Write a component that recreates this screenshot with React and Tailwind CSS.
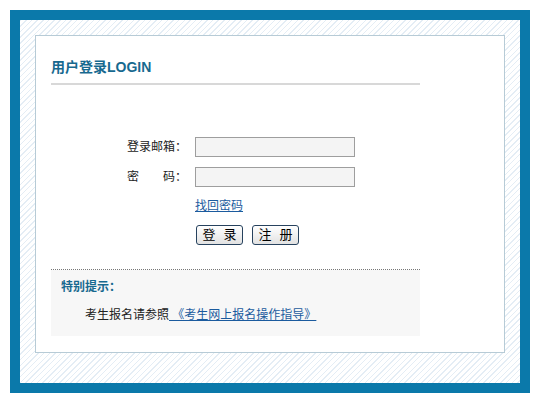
export default function App() {
  const font = "font-['Liberation_Sans','Noto_Sans_CJK_SC',sans-serif]";
  const btn =
    "w-[47px] h-[20px] border border-[#27425e] rounded-[3px] bg-linear-to-b from-white to-[#e2e2e2] text-[13px] leading-[18px] text-black flex items-center justify-center gap-[8px]";
  return (
    <div className={`w-[541px] h-[406px] bg-white p-[10px] ${font}`}>
      <div className="w-[520px] h-[383px] border-[10px] border-[#0b79aa] bg-[repeating-linear-gradient(135deg,#e4edf5_0px,#e4edf5_1px,#ffffff_1px,#ffffff_4px)] pt-[15px] pl-[15px]">
        <div className="w-[470px] h-[318px] border border-[#b7cbd6] bg-white pl-[15px] pt-[21px]">
          <div className="w-[369px] flex flex-col">
            <div className="h-[20px] leading-[20px] text-[14px] font-bold text-[#17698f]">用户登录LOGIN</div>
            <div className="mt-[6px] h-[2px] bg-[#d8d8d8]" />

            <div className="mt-[52px] flex items-center pl-[76px] h-[20px]">
              <span className="w-[60px] text-[12px] leading-[20px] text-[#222]">登录邮箱：</span>
              <input className="ml-[8px] w-[160px] h-[20px] border border-[#9e9e9e] bg-[#f4f4f4] outline-none" />
            </div>
            <div className="mt-[10px] flex items-center pl-[76px] h-[20px]">
              <span className="w-[60px] text-[12px] leading-[20px] text-[#222] whitespace-pre">密　　码：</span>
              <input type="password" className="ml-[8px] w-[160px] h-[20px] border border-[#9e9e9e] bg-[#f4f4f4] outline-none" />
            </div>

            <div className="mt-[11px] pl-[144px] h-[16px] leading-[16px] text-[12px]">
              <a className="text-[#1b5b9e] underline">找回密码</a>
            </div>

            <div className="mt-[11px] pl-[145px] flex gap-[9px]">
              <button className={btn}><span>登</span><span>录</span></button>
              <button className={btn}><span>注</span><span>册</span></button>
            </div>

            <div className="mt-[24px] border-t border-dotted border-[#777]" />
            <div className="h-[66px] bg-[#f7f7f7] pl-[10px] pt-[9px]">
              <div className="h-[16px] leading-[16px] text-[12px] font-bold text-[#17698f]">特别提示：</div>
              <div className="mt-[12px] pl-[24px] h-[16px] leading-[16px] text-[12px] text-[#222] whitespace-pre">
                考生报名请参照<a className="text-[#1b5b9e] underline"> 《考生网上报名操作指导》</a>
              </div>
            </div>
          </div>
        </div>
      </div>
    </div>
  );
}
